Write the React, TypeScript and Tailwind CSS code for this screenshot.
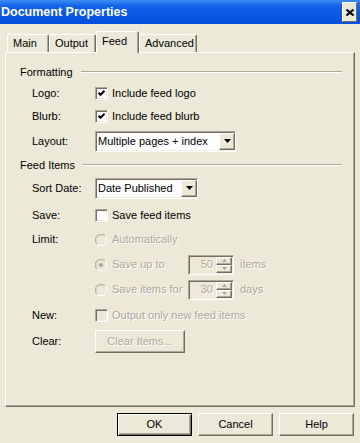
import React from 'react';

const raised =
  'border border-t-white border-l-white border-r-[#716f64] border-b-[#716f64] shadow-[inset_-1px_-1px_0_#aca899]';
const sunken =
  'border border-t-[#aca899] border-l-[#aca899] border-r-white border-b-white shadow-[inset_1px_1px_0_#716f64,inset_-1px_-1px_0_#f1efe2]';
const disabledText = 'text-[#aca899] [text-shadow:1px_1px_0_#fff]';

function GroupHeader({ title, className = '' }: { title: string; className?: string }) {
  return (
    <div className={`flex items-center h-[16px] ${className}`}>
      <span>{title}</span>
      <div className="flex-1 ml-[8px] h-0 border-t border-t-[#aca899] border-b border-b-white" />
    </div>
  );
}

function Row({ label, h, children }: { label: string; h: string; children: React.ReactNode }) {
  return (
    <div className={`flex items-center pl-[12px] ${h}`}>
      <span className="w-[63px] shrink-0">{label}</span>
      {children}
    </div>
  );
}

function Checkbox({ checked, disabled, label }: { checked?: boolean; disabled?: boolean; label: string }) {
  return (
    <div className="flex items-center">
      <span className={`w-[13px] h-[13px] flex items-center justify-center ${sunken} ${disabled ? 'bg-[#ece9d8]' : 'bg-white'}`}>
        {checked && (
          <svg width="9" height="9" viewBox="0 0 9 9">
            <polyline points="1.5,3.8 3.5,5.8 7.5,1.8" fill="none" stroke="#000" strokeWidth="2" />
          </svg>
        )}
      </span>
      <span className={`ml-[4px] ${disabled ? disabledText : ''}`}>{label}</span>
    </div>
  );
}

function Radio({ selected }: { selected?: boolean }) {
  return (
    <svg width="12" height="12" viewBox="0 0 12 12" className="shrink-0">
      <circle cx="6" cy="6" r="5.5" fill="#ece9d8" />
      <path d="M1.9 10.1 A5.5 5.5 0 0 1 10.1 1.9" fill="none" stroke="#aca899" strokeWidth="1" />
      <path d="M2.6 9.4 A4.5 4.5 0 0 1 9.4 2.6" fill="none" stroke="#d6d2c2" strokeWidth="1" />
      <path d="M10.1 1.9 A5.5 5.5 0 0 1 1.9 10.1" fill="none" stroke="#fff" strokeWidth="1" />
      {selected && <circle cx="6" cy="6" r="2" fill="#aca899" />}
    </svg>
  );
}

function DropButton() {
  return (
    <span className={`w-[16px] h-[17px] flex items-center justify-center bg-[#ece9d8] ${raised}`}>
      <svg width="7" height="4" viewBox="0 0 7 4">
        <path d="M0 0 H7 L3.5 4 Z" fill="#000" />
      </svg>
    </span>
  );
}

function Select({ value, w }: { value: string; w: string }) {
  return (
    <div className={`flex items-center justify-between h-[21px] bg-white ${sunken} ${w}`}>
      <span className="pl-[2px] whitespace-nowrap">{value}</span>
      <DropButton />
    </div>
  );
}

function Spin({ value }: { value: string }) {
  return (
    <div className={`flex items-center h-[20px] w-[46px] bg-[#ece9d8] ${sunken}`}>
      <span className={`flex-1 text-right pr-[3px] ${disabledText}`}>{value}</span>
      <div className="flex flex-col w-[16px] h-[16px] mr-[1px]">
        <span className={`flex-1 flex items-center justify-center ${raised}`}>
          <svg width="5" height="3" viewBox="0 0 5 3">
            <path d="M0 3 H5 L2.5 0 Z" fill="#aca899" />
          </svg>
        </span>
        <span className={`flex-1 flex items-center justify-center ${raised}`}>
          <svg width="5" height="3" viewBox="0 0 5 3">
            <path d="M0 0 H5 L2.5 3 Z" fill="#aca899" />
          </svg>
        </span>
      </div>
    </div>
  );
}

export default function App() {
  const tabs = [
    { name: 'Main', w: 'w-[42px]' },
    { name: 'Output', w: 'w-[47px]' },
    { name: 'Feed', w: 'w-[43px]', active: true },
    { name: 'Advanced', w: 'w-[58px]' },
  ];

  return (
    <div className="w-[360px] h-[443px] bg-[#ece9d8] flex flex-col text-[11px] text-black font-['Liberation_Sans',Arial,sans-serif] overflow-hidden">
      {/* title bar */}
      <div className="h-[24px] flex items-center justify-between bg-[linear-gradient(180deg,#3d8cf5_0%,#1262e8_25%,#0856e2_65%,#0450dc_100%)]">
        <span className="pl-[1px] text-white font-bold text-[12.5px]">Document Properties</span>
        <span className="mr-[3px] w-[15px] h-[20px] flex items-center justify-center bg-[#ece9d8] border border-t-white border-l-white border-r-[#716f64] border-b-[#716f64]">
          <svg width="8" height="7" viewBox="0 0 8 7">
            <path d="M0.5 0.5 L7.5 6.5 M7.5 0.5 L0.5 6.5" stroke="#000" strokeWidth="2" />
          </svg>
        </span>
      </div>

      {/* tabs */}
      <div className="flex items-end h-[28px] pl-[7px]">
        {tabs.map(t => (
          <div
            key={t.name}
            className={`${t.w} pl-[5px] flex items-center rounded-t-[2px] border-t border-l border-t-white border-l-white border-r border-r-[#716f64] shadow-[inset_-1px_0_0_#aca899] ${
              t.active ? 'h-[22px] -mb-px relative z-10 bg-[#ece9d8] pb-[3px]' : 'h-[18px]'
            }`}
          >
            {t.name}
          </div>
        ))}
      </div>

      {/* page */}
      <div className="mx-[5px] h-[355px] border border-t-white border-l-white border-r-[#716f64] border-b-[#716f64] shadow-[inset_-1px_-1px_0_#aca899] pl-[14px] pr-[12px] pt-[11px]">
        <GroupHeader title="Formatting" className="mb-[2px]" />
        <Row label="Logo:" h="h-[23px]">
          <Checkbox checked label="Include feed logo" />
        </Row>
        <Row label="Blurb:" h="h-[23px]">
          <Checkbox checked label="Include feed blurb" />
        </Row>
        <Row label="Layout:" h="h-[26px]">
          <Select value="Multiple pages + index" w="w-[141px]" />
        </Row>

        <GroupHeader title="Feed Items" className="mt-[3px]" />
        <Row label="Sort Date:" h="h-[30px]">
          <Select value="Date Published" w="w-[103px]" />
        </Row>
        <Row label="Save:" h="h-[24px]">
          <Checkbox label="Save feed items" />
        </Row>
        <Row label="Limit:" h="h-[25px]">
          <div className="flex items-center">
            <Radio />
            <span className={`ml-[5px] ${disabledText}`}>Automatically</span>
          </div>
        </Row>
        <Row label="" h="h-[25px]">
          <div className="flex items-center w-[93px]">
            <Radio selected />
            <span className={`ml-[5px] ${disabledText}`}>Save up to</span>
          </div>
          <Spin value="50" />
          <span className={`ml-[6px] ${disabledText}`}>items</span>
        </Row>
        <Row label="" h="h-[25px]">
          <div className="flex items-center w-[93px]">
            <Radio />
            <span className={`ml-[5px] ${disabledText}`}>Save items for</span>
          </div>
          <Spin value="30" />
          <span className={`ml-[6px] ${disabledText}`}>days</span>
        </Row>
        <Row label="New:" h="h-[26px]">
          <Checkbox disabled label="Output only new feed items" />
        </Row>
        <Row label="Clear:" h="h-[26px]">
          <button className={`w-[90px] h-[23px] bg-[#ece9d8] ${raised} ${disabledText}`}>Clear Items...</button>
        </Row>
      </div>

      {/* bottom buttons */}
      <div className="flex justify-end gap-[6px] pr-[6px] mt-[6px]">
        <button className="w-[75px] h-[23px] bg-[#ece9d8] border border-black shadow-[inset_1px_1px_0_#fff,inset_-1px_-1px_0_#716f64,inset_-2px_-2px_0_#aca899]">
          OK
        </button>
        <button className={`w-[75px] h-[23px] bg-[#ece9d8] ${raised}`}>Cancel</button>
        <button className={`w-[75px] h-[23px] bg-[#ece9d8] ${raised}`}>Help</button>
      </div>
    </div>
  );
}
